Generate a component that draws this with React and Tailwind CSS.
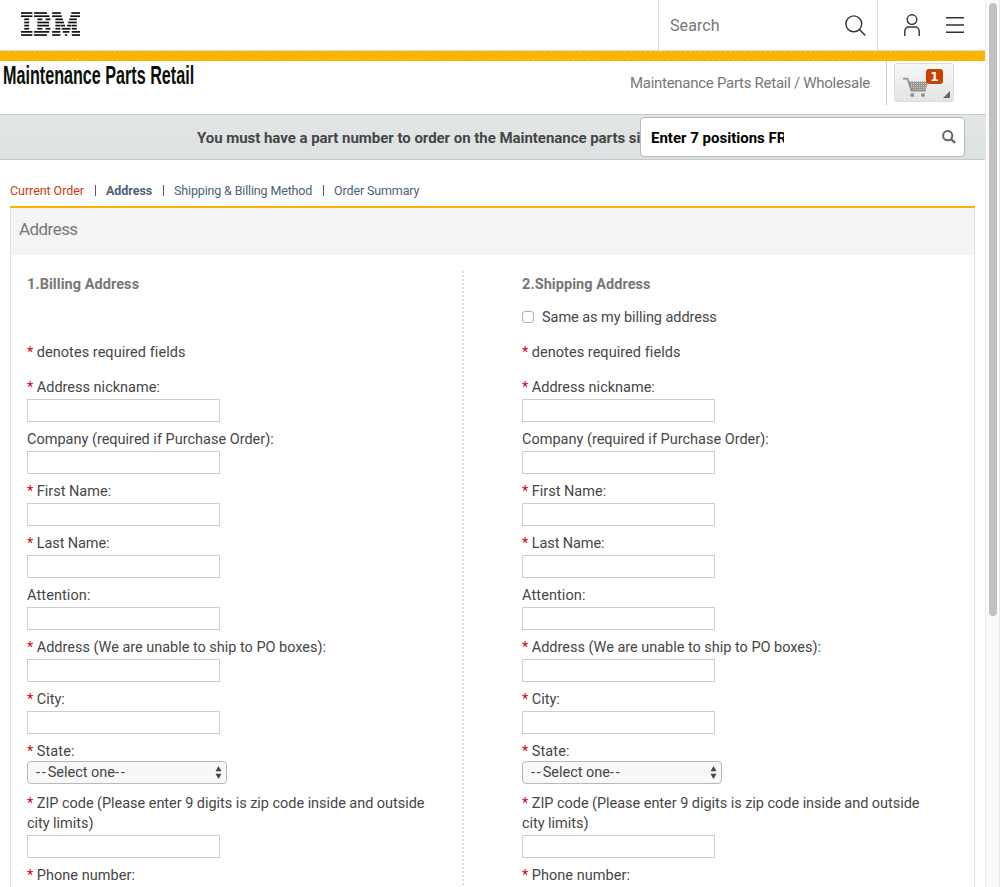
import React from "react";

const LOGO_ROWS = [
  [[0, 193], [222, 440], [528, 675], [853, 1000]],
  [[0, 193], [222, 480], [528, 692], [836, 1000]],
  [[55, 138], [277, 361], [416, 499], [583, 710], [818, 945]],
  [[55, 138], [277, 475], [583, 728], [800, 945]],
  [[55, 138], [277, 475], [583, 667], [673, 746], [782, 855], [861, 945]],
  [[55, 138], [277, 361], [416, 499], [583, 667], [690, 838], [861, 945]],
  [[0, 193], [222, 480], [528, 667], [708, 820], [861, 1000]],
  [[0, 193], [222, 440], [528, 667], [745, 783], [861, 1000]],
];

function Logo() {
  return (
    <svg className="mb-[2px] ml-[20.5px] h-6 w-[59px]" viewBox="0 0 1000 24" preserveAspectRatio="none" fill="#111">
      {LOGO_ROWS.map((row, i) =>
        row.map(([a, b]) => <rect key={i + "-" + a} x={a} y={0.2 + i * 3.14} width={b - a} height="1.7" />)
      )}
    </svg>
  );
}

function Header() {
  return (
    <header className="flex h-[51px] items-center border-b border-[#dcdcdc] bg-white">
      <Logo />
      <div className="ml-auto flex h-full w-[220px] items-center border-x border-[#dcdcdc] pl-[11px] pr-[11px]">
        <span className="pt-[2px] text-[16px] tracking-[0.1px] text-[#777]">Search</span>
        <svg className="ml-auto h-[21px] w-[21px]" viewBox="0 0 21 21" fill="none" stroke="#323232" strokeWidth="1.4">
          <circle cx="8.8" cy="8.8" r="7.9" />
          <path d="M14.4 14.4 20.4 20.4" />
        </svg>
      </div>
      <div className="flex w-[107px] items-center pl-[26px]">
        <svg className="h-[22px] w-4" viewBox="0 0 16 22" fill="none" stroke="#323232" strokeWidth="1.4">
          <circle cx="8" cy="5.6" r="4.8" />
          <path d="M.8 22v-5a4 4 0 0 1 4-4h6.4a4 4 0 0 1 4 4v5" />
        </svg>
        <svg className="ml-[26px] h-4 w-[18px]" viewBox="0 0 18 16" stroke="#323232" strokeWidth="1.4">
          <path d="M0 .8h18M0 8h18M0 15.2h18" />
        </svg>
      </div>
    </header>
  );
}

function Cart() {
  return (
    <div className="relative ml-[7px] mt-[2px] h-[39px] w-[60px] rounded-[3px] border border-[#dcdcdc] bg-linear-to-b from-[#f6f7f7] to-[#e2e5e5]">
      <svg className="absolute left-[8px] top-[13px] h-[22px] w-[26px]" viewBox="0 0 26 22">
        <defs>
          <pattern id="mesh" width="2" height="2" patternUnits="userSpaceOnUse">
            <rect width="2" height="2" fill="#9b978f" />
            <rect width="1" height="1" fill="#c9c7c3" />
          </pattern>
        </defs>
        <path d="M4.5 4.6h20.5l-2.4 9H8z" fill="url(#mesh)" />
        <path d="M0 1.6h4.4l4 12h14.4" fill="none" stroke="#949088" strokeWidth="1.6" />
        <circle cx="9.2" cy="18" r="2" fill="#949088" />
        <circle cx="20" cy="18" r="2" fill="#949088" />
      </svg>
      <span className="absolute left-[31px] top-[5px] flex h-[15px] w-[17px] items-center justify-center rounded-[3px] bg-[#cc4100] font-['DejaVu_Sans',sans-serif] text-[12px] leading-none font-bold text-white">
        1
      </span>
      <svg className="absolute right-[3px] bottom-[3px] h-[7px] w-[7px]" viewBox="0 0 7 7" fill="#666">
        <path d="M7 0v7H0z" />
      </svg>
    </div>
  );
}

function TitleRow() {
  return (
    <div className="flex h-[53px]">
      <div className="h-[28px] w-[194px] pl-[3px]">
        <span className="block origin-left scale-x-[0.646] whitespace-nowrap font-['Liberation_Sans',sans-serif] text-[25px] leading-[28px] font-bold text-[#0c100a]">
          Maintenance Parts Retail
        </span>
      </div>
      <div className="ml-auto mr-[31px] flex">
        <div className="h-[44px] border-r border-[#c8c8c8] pr-[16px] text-[15px] leading-[44px] tracking-[-0.28px] whitespace-nowrap text-[#777]">
          Maintenance Parts Retail / Wholesale
        </div>
        <Cart />
      </div>
    </div>
  );
}

function Banner() {
  return (
    <div className="flex h-[46px] items-center border-y border-[#c3cccb] bg-linear-to-b from-[#e3e7e7] to-[#dbe0e0]">
      <p className="ml-[197px] w-[443px] overflow-hidden pt-[2px] text-[15px] tracking-[-0.035px] font-bold whitespace-nowrap text-[#464646]">
        You must have a part number to order on the Maintenance parts site
      </p>
      <div className="flex h-10 w-[325px] items-center rounded-[4px] border border-[#b8b8b8] bg-white pl-[10px] pr-[8px]">
        <span className="w-[133px] overflow-hidden pt-[2px] text-[15px] font-bold whitespace-nowrap text-black">
          Enter 7 positions FRU
        </span>
        <svg className="ml-auto h-[14px] w-[14px]" viewBox="0 0 14 14" fill="none" stroke="#666">
          <circle cx="5.7" cy="5.7" r="4.6" strokeWidth="2" />
          <path d="M9 9 13 13" strokeWidth="2.4" />
        </svg>
      </div>
    </div>
  );
}

function Steps() {
  return (
    <nav className="mx-[10px] flex h-[46px] items-center pt-[16px] text-[12.5px] tracking-[-0.06px] whitespace-nowrap text-[#4d6079]">
      <span className="w-[74px] text-[#cc3b0b]">Current Order</span>
      <i className="ml-[11px] mb-[2px] h-[11px] w-px bg-[#4d6079]" />
      <b className="ml-[10px] w-[47px]">Address</b>
      <i className="ml-[10px] mb-[2px] h-[11px] w-px bg-[#4d6079]" />
      <span className="ml-[10px] w-[138px] tracking-[-0.15px]">Shipping &amp; Billing Method</span>
      <i className="ml-[11px] mb-[2px] h-[11px] w-px bg-[#4d6079]" />
      <span className="ml-[10px] tracking-[-0.13px]">Order Summary</span>
    </nav>
  );
}

const FIELDS = [
  { label: "Address nickname:", required: true },
  { label: "Company (required if Purchase Order):" },
  { label: "First Name:", required: true },
  { label: "Last Name:", required: true, className: "tracking-[-0.1px]" },
  { label: "Attention:", className: "tracking-[0.1px]" },
  { label: "Address (We are unable to ship to PO boxes):", required: true, className: "tracking-[-0.02px]" },
  { label: "City:", required: true },
  { label: "State:", required: true, select: true, className: "tracking-[0.1px]" },
  {
    label: "ZIP code (Please enter 9 digits is zip code inside and outside city limits)",
    required: true,
    className: "tracking-[-0.04px]",
  },
  { label: "Phone number:", required: true, className: "tracking-[0.05px]" },
];

function Star() {
  return <span className="mr-[3.5px] tracking-normal text-[#d9001b]">*</span>;
}

function Select() {
  return (
    <div className="flex h-[23px] w-[200px] items-center rounded-[4px] border border-[#b9b9b9] bg-[#f8f8f8] pl-[8px] pr-[4px]">
      <span className="pt-px">
        <span className="tracking-[1.8px]">--</span>Select one<span className="tracking-[1.8px]">--</span>
      </span>
      <svg className="ml-auto h-[13px] w-[7px]" viewBox="0 0 7 13" fill="#464646">
        <path d="M3.5 0 6.5 5.3H.5zM3.5 13 .5 7.7h6z" />
      </svg>
    </div>
  );
}

function AddressForm({ title, checkbox }) {
  return (
    <section className="w-[410px] pt-[4px] text-[14.5px] leading-5 text-[#464646]">
      <h2 className="font-bold tracking-[0.06px] text-[#777]">{title}</h2>
      <div className="mt-[13px] flex h-5 items-center">
        {checkbox && (
          <>
            <span className="mb-[2px] h-3 w-3 rounded-[3px] border border-[#adadad] bg-white" />
            <span className="ml-[8px] tracking-[-0.06px]">Same as my billing address</span>
          </>
        )}
      </div>
      <p className="mt-[15px] mb-[15px] tracking-[0.05px]"><Star />denotes required fields</p>
      {FIELDS.map((f) => (
        <div key={f.label} className="mb-[8px]">
          <div className={f.className}>{f.required && <Star />}{f.label}</div>
          {f.select ? (
            <div className="-mt-px h-[25px]"><Select /></div>
          ) : (
            <div className="mt-px h-[23px] w-[193px] border border-[#cdcdcd] bg-white" />
          )}
        </div>
      ))}
    </section>
  );
}

export default function App() {
  return (
    <div className="flex h-[887px] w-[1000px] overflow-hidden bg-white font-[Roboto,sans-serif]">
      <main className="w-[985px] shrink-0">
        <Header />
        <div className="h-[10px] bg-[repeating-linear-gradient(135deg,#ffbb00_0px,#ffbb00_1.6px,#f8a806_2.2px,#ffbb00_3.54px)]" />
        <TitleRow />
        <Banner />
        <Steps />
        <div className="mx-[10px] border-t-2 border-[#fdaf00]">
          <div className="border-x border-[#e2e2e2]">
            <h1 className="h-[47px] bg-[#f4f4f4] pl-[8px] text-[17px] leading-[43px] tracking-[-0.55px] text-[#777]">Address</h1>
            <div className="flex pl-[16px] pt-[16px]">
              <AddressForm title="1.Billing Address" />
              <div className="ml-[25px] w-[2px] bg-[repeating-linear-gradient(to_bottom,#e0e0e0_0px,#e0e0e0_2px,transparent_2px,transparent_4px)]" />
              <div className="w-[58px]" />
              <AddressForm title="2.Shipping Address" checkbox />
            </div>
          </div>
        </div>
      </main>
      <aside className="w-[15px] shrink-0 border-x border-[#e8e8e8] bg-[#fafafa] pl-[3px] pt-[3px]">
        <div className="h-[613px] w-2 rounded-full bg-[#c1c1c1]" />
      </aside>
    </div>
  );
}
